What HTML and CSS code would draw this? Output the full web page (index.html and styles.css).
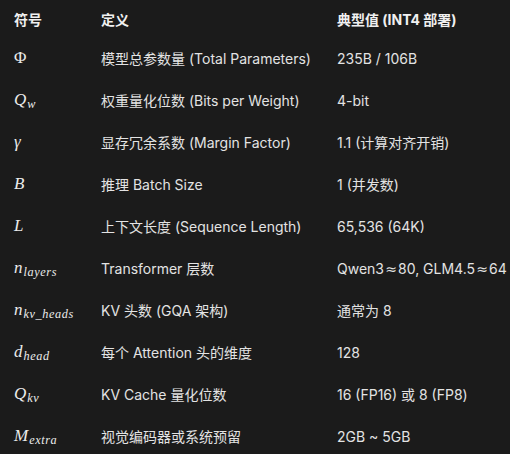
FILE: index.html
```html
<!DOCTYPE html>
<html lang="zh">
<head>
<meta charset="utf-8">
<link rel="stylesheet" href="styles.css">
</head>
<body>
<table class="params">
  <colgroup>
    <col class="c-sym"><col class="c-def"><col class="c-val">
  </colgroup>
  <thead>
    <tr><th>符号</th><th>定义</th><th>典型值 (INT4 部署)</th></tr>
  </thead>
  <tbody>
    <tr><td><span class="m"><span class="up">Φ</span></span></td><td>模型总参数量 (Total Parameters)</td><td>235B / 106B</td></tr>
    <tr><td><span class="m">Q<sub>w</sub></span></td><td>权重量化位数 (Bits per Weight)</td><td>4-bit</td></tr>
    <tr><td><span class="m">γ</span></td><td>显存冗余系数 (Margin Factor)</td><td>1.1 (计算对齐开销)</td></tr>
    <tr><td><span class="m">B</span></td><td>推理 Batch Size</td><td>1 (并发数)</td></tr>
    <tr><td><span class="m">L</span></td><td>上下文长度 (Sequence Length)</td><td>65,536 (64K)</td></tr>
    <tr><td><span class="m">n<sub>layers</sub></span></td><td>Transformer 层数</td><td>Qwen3<span class="approx">≈</span>80, GLM4.5<span class="approx">≈</span>64</td></tr>
    <tr><td><span class="m">n<sub>kv_heads</sub></span></td><td>KV 头数 (GQA 架构)</td><td>通常为 8</td></tr>
    <tr><td><span class="m">d<sub>head</sub></span></td><td>每个 Attention 头的维度</td><td>128</td></tr>
    <tr><td><span class="m">Q<sub>kv</sub></span></td><td>KV Cache 量化位数</td><td>16 (FP16) 或 8 (FP8)</td></tr>
    <tr><td><span class="m">M<sub>extra</sub></span></td><td>视觉编码器或系统预留</td><td>2GB ~ 5GB</td></tr>
  </tbody>
</table>
</body>
</html>
```
FILE: styles.css
```css
html, body {
  margin: 0;
  padding: 0;
  background: #1b1b1b;
}
body {
  color: #e3e3e3;
  font-family: Inter, "Noto Sans CJK SC", sans-serif;
  font-size: 14px;
  overflow: hidden;
}
.params {
  border-collapse: collapse;
  table-layout: fixed;
  width: 510px;
}
.c-sym { width: 87px; }
.c-def { width: 236px; }
.c-val { width: 187px; }
.params th {
  text-align: left;
  font-weight: 700;
  color: #f0f0f0;
  height: 37px;
  padding: 0 0 0 14px;
  vertical-align: middle;
}
.params td {
  height: 42px;
  padding: 0 0 0 14px;
  vertical-align: middle;
  white-space: nowrap;
}
.approx {
  font-family: "DejaVu Sans", sans-serif;
  display: inline-block;
  width: 14px;
  text-align: center;
}
.m {
  font-family: "Liberation Serif", "DejaVu Serif", serif;
  font-style: italic;
  font-size: 17px;
  color: #ececec;
}
.m .up { font-style: normal; }
.m sub {
  font-size: 0.72em;
  letter-spacing: 0.6px;
  vertical-align: -0.24em;
  line-height: 0;
  margin-left: 1px;
}
```
